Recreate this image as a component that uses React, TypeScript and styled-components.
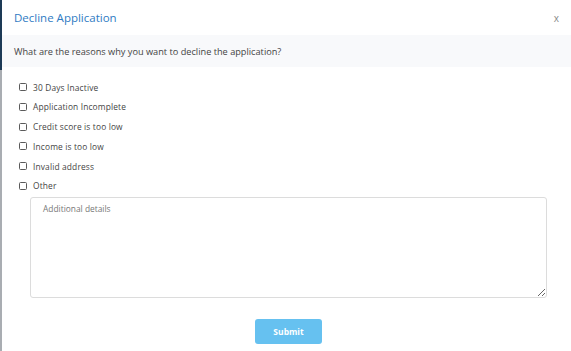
import styled, { createGlobalStyle } from 'styled-components';

const GlobalStyle = createGlobalStyle`
  html, body {
    margin: 0;
    padding: 0;
  }
  body {
    font-family: 'Open Sans', 'Noto Sans', sans-serif;
    background: linear-gradient(to bottom, #1d3a56 0, #1d3a56 70px, #a9adb2 70px);
  }
`;

const Backdrop = styled.div`
  display: flex;
  height: 351px;
  padding-left: 2px;
  box-sizing: border-box;
`;

const Modal = styled.div`
  flex: 1;
  display: flex;
  flex-direction: column;
  background: #ffffff;
`;

const Header = styled.div`
  display: flex;
  align-items: center;
  justify-content: space-between;
  height: 35px;
  padding: 0 12px 0 12px;
`;

const Title = styled.h2`
  margin: 0;
  font-size: 11.5px;
  font-weight: 400;
  color: #2f7bc3;
`;

const Close = styled.button`
  border: none;
  background: none;
  padding: 0;
  font-family: inherit;
  font-size: 10px;
  color: #8a8a8a;
  cursor: pointer;
`;

const Prompt = styled.div`
  display: flex;
  align-items: center;
  height: 32px;
  padding: 0 12px;
  background: #f8f9fb;
  font-size: 9.2px;
  color: #444;
`;

const Body = styled.div`
  display: flex;
  flex-direction: column;
  padding: 14px 24px 0 17px;
`;

const Options = styled.div`
  display: flex;
  flex-direction: column;
  gap: 7.8px;
`;

const Option = styled.label`
  display: flex;
  align-items: center;
  gap: 6px;
  height: 12px;
  font-size: 8.4px;
  letter-spacing: 0.15px;
  color: #444;
`;

const Box = styled.input`
  appearance: none;
  margin: 0;
  width: 8px;
  height: 8px;
  border: 1px solid #5a5a5a;
  border-radius: 1.5px;
  box-sizing: border-box;
  background: #fff;
  &:checked {
    background: #2f7bc3;
    border-color: #2f7bc3;
  }
`;

const Details = styled.textarea`
  margin: 5px 0 0 11px;
  height: 101px;
  padding: 5px 12px;
  border: 1px solid #dcdcdc;
  border-radius: 3px;
  box-sizing: border-box;
  font-family: inherit;
  font-size: 8.4px;
  color: #444;
  outline: none;
  &::placeholder {
    color: #777;
  }
`;

const Footer = styled.div`
  display: flex;
  justify-content: center;
  padding-top: 21px;
  padding-left: 4px;
`;

const Submit = styled.button`
  width: 67px;
  height: 25px;
  border: none;
  border-radius: 3px;
  background: #66c1f0;
  color: #fff;
  font-family: inherit;
  font-size: 8.5px;
  font-weight: 700;
  cursor: pointer;
`;

const reasons = [
  '30 Days Inactive',
  'Application Incomplete',
  'Credit score is too low',
  'Income is too low',
  'Invalid address',
  'Other',
];

export default function App() {
  return (
    <>
      <GlobalStyle />
      <Backdrop>
        <Modal>
          <Header>
            <Title>Decline Application</Title>
            <Close>x</Close>
          </Header>
          <Prompt>What are the reasons why you want to decline the application?</Prompt>
          <Body>
            <Options>
              {reasons.map((r) => (
                <Option key={r}>
                  <Box type="checkbox" />
                  {r}
                </Option>
              ))}
            </Options>
            <Details placeholder="Additional details" />
          </Body>
          <Footer>
            <Submit>Submit</Submit>
          </Footer>
        </Modal>
      </Backdrop>
    </>
  );
}
